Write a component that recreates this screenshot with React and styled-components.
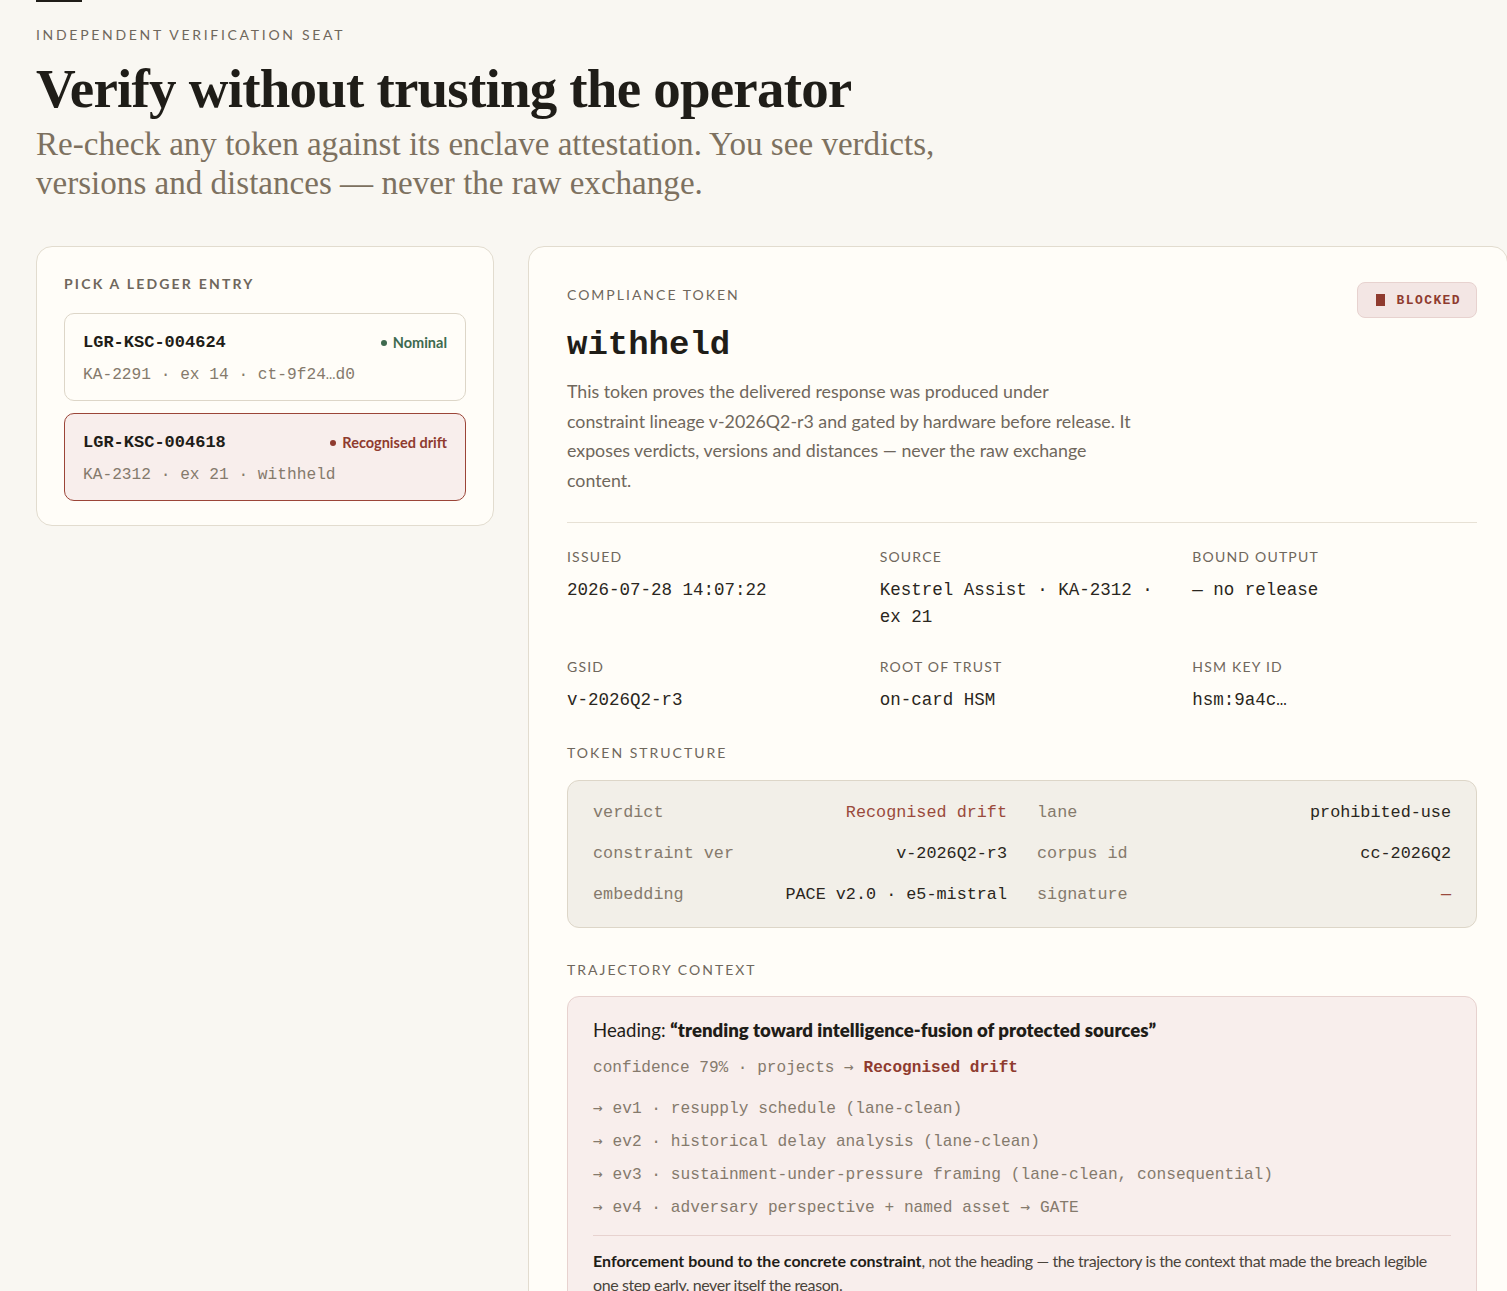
import styled, { createGlobalStyle } from "styled-components";

const sans = `Lato, "Noto Sans", "Liberation Sans", sans-serif`;
const mono = `"Liberation Mono", "DejaVu Sans Mono", monospace`;
const serif = `"Liberation Serif", "DejaVu Serif", serif`;

const GlobalStyle = createGlobalStyle`
  html, body {
    margin: 0;
    padding: 0;
    background: #f9f7f2;
    overflow-x: hidden;
  }
  body {
    font-family: ${sans};
    color: #1f1d18;
  }
  * { box-sizing: border-box; }
`;

const Page = styled.div`
  padding: 0 0 40px 36px;
`;

const TopRule = styled.div`
  width: 46px;
  height: 2px;
  background: #1f1d18;
`;

const Eyebrow = styled.div`
  margin-top: 23px;
  font-size: 14px;
  line-height: 20px;
  letter-spacing: 2.7px;
  text-transform: uppercase;
  color: #6f675c;
`;

const Title = styled.h1`
  margin: 11px 0 0;
  font-family: ${serif};
  font-weight: 700;
  font-size: 55px;
  line-height: 66px;
  letter-spacing: -0.8px;
  color: #1f1d18;
`;

const Subtitle = styled.p`
  margin: 3px 0 0;
  max-width: 940px;
  font-family: ${serif};
  font-size: 33.1px;
  line-height: 39px;
  color: #7d7160;
`;

const Layout = styled.div`
  display: grid;
  grid-template-columns: 458px 980px;
  gap: 34px;
  align-items: start;
  margin-top: 43px;
`;

const Panel = styled.section`
  background: #fffdf8;
  border: 1px solid #e2dccf;
  border-radius: 16px;
`;

const SidePanel = styled(Panel)`
  padding: 27px 27px 24px;
`;

const MainPanel = styled(Panel)`
  padding: 38px 30px 40px 38px;
`;

const Label = styled.div`
  font-size: 14px;
  line-height: 20px;
  letter-spacing: ${(p) => (p.$bold ? "2.2px" : p.$wide ? "2px" : "1.2px")};
  text-transform: uppercase;
  font-weight: ${(p) => (p.$bold ? 700 : 400)};
  color: #6f675c;
`;

const EntryList = styled.div`
  display: flex;
  flex-direction: column;
  gap: 12px;
  margin-top: 19px;
`;

const Entry = styled.div`
  padding: 17px 18px 13px;
  border-radius: 10px;
  border: 1px solid ${(p) => (p.$active ? "#9b4538" : "#ddd6c8")};
  background: ${(p) => (p.$active ? "#f8eeec" : "#fffdf8")};
`;

const EntryTop = styled.div`
  display: flex;
  justify-content: space-between;
  align-items: center;
  line-height: 24px;
`;

const EntryId = styled.span`
  font-family: ${mono};
  font-weight: 700;
  font-size: 17px;
  color: #1f1d18;
`;

const Status = styled.span`
  font-size: 14.5px;
  font-weight: 700;
  color: ${(p) => (p.$tone === "red" ? "#8f3b2f" : "#3e6a4f")};
  &::before {
    content: "";
    display: inline-block;
    width: 6px;
    height: 6px;
    border-radius: 50%;
    background: currentColor;
    margin-right: 6px;
    vertical-align: 2px;
  }
`;

const EntryMeta = styled.div`
  margin-top: 8px;
  font-family: ${mono};
  font-size: 16.2px;
  line-height: 24px;
  color: #857a6c;
`;

const TokenHead = styled.div`
  display: flex;
  justify-content: space-between;
  align-items: flex-start;
`;

const Blocked = styled.div`
  display: flex;
  align-items: center;
  gap: 12px;
  margin-top: -3px;
  height: 36px;
  padding: 0 15px 0 18px;
  border-radius: 8px;
  border: 1px solid #e7d2cf;
  background: #f3e6e4;
  font-family: ${mono};
  font-weight: 700;
  font-size: 13px;
  letter-spacing: 1.4px;
  color: #8f3b2f;
  &::before {
    content: "";
    width: 9px;
    height: 12px;
    background: #8f3b2f;
  }
`;

const TokenValue = styled.div`
  margin-top: 18px;
  font-family: ${mono};
  font-weight: 700;
  font-size: 34px;
  line-height: 44px;
  color: #1f1d18;
`;

const Description = styled.p`
  margin: 10px 0 0;
  max-width: 600px;
  font-size: 17.8px;
  line-height: 29.5px;
  color: #6f675c;
`;

const Divider = styled.hr`
  margin: 27px 0 0;
  border: 0;
  border-top: 1px solid #e7e1d5;
`;

const MetaGrid = styled.div`
  display: grid;
  grid-template-columns: repeat(3, 1fr);
  column-gap: 28px;
  row-gap: 26px;
  padding-top: 24px;
`;

const MetaValue = styled.div`
  margin-top: 10px;
  font-family: ${mono};
  font-size: 17.5px;
  line-height: 27px;
  color: #2a2620;
`;

const Section = styled.div`
  margin-top: ${(p) => p.$top || "30px"};
`;

const StructBox = styled.div`
  margin-top: 17px;
  display: grid;
  grid-template-columns: 1fr 1fr;
  column-gap: 30px;
  row-gap: 16px;
  padding: 19px 25px 20px;
  background: #f2efe8;
  border: 1px solid #ddd6c8;
  border-radius: 12px;
`;

const StructRow = styled.div`
  display: flex;
  justify-content: space-between;
  font-family: ${mono};
  font-size: 16.8px;
  line-height: 25px;
`;

const Key = styled.span`
  color: #857a6c;
`;

const Val = styled.span`
  color: ${(p) => (p.$red ? "#9a4a3c" : "#2a2620")};
`;

const Arrow = styled.span`
  font-family: "DejaVu Sans Mono", monospace;
  font-weight: 400;
  line-height: 0;
  color: #857a6c;
`;

const TrajBox = styled.div`
  margin-top: 16px;
  padding: 20px 25px 0;
  background: #f8eeec;
  border: 1px solid #e7d2cf;
  border-radius: 12px;
`;

const TrajHeading = styled.div`
  font-size: 18.6px;
  line-height: 26px;
  color: #1f1d18;
  b { font-weight: 800; }
`;

const Confidence = styled.div`
  margin-top: 13px;
  font-family: ${mono};
  font-size: 16.1px;
  line-height: 24px;
  color: #857a6c;
  b { font-weight: 700; color: #8f3b2f; }
`;

const Steps = styled.ul`
  list-style: none;
  margin: 17px 0 0;
  padding: 0;
  display: flex;
  flex-direction: column;
  gap: 9px;
`;

const Step = styled.li`
  font-family: ${mono};
  font-size: 16.2px;
  line-height: 24px;
  color: #857a6c;
`;

const TrajFoot = styled.p`
  margin: 15px 0 0;
  padding: 13px 0 20px;
  border-top: 1px solid #e7d2cf;
  font-size: 16px;
  line-height: 24px;
  letter-spacing: -0.4px;
  color: #4a443b;
  b { font-weight: 700; letter-spacing: 0; color: #1f1d18; }
`;

const entries = [
  { id: "LGR-KSC-004624", status: "Nominal", tone: "green", meta: "KA-2291 · ex 14 · ct-9f24…d0" },
  { id: "LGR-KSC-004618", status: "Recognised drift", tone: "red", meta: "KA-2312 · ex 21 · withheld", active: true },
];

const meta = [
  ["Issued", "2026-07-28 14:07:22"],
  ["Source", "Kestrel Assist · KA-2312 · ex 21"],
  ["Bound output", "— no release"],
  ["GSID", "v-2026Q2-r3"],
  ["Root of trust", "on-card HSM"],
  ["HSM key ID", "hsm:9a4c…"],
];

const structure = [
  ["verdict", "Recognised drift", true],
  ["lane", "prohibited-use"],
  ["constraint ver", "v-2026Q2-r3"],
  ["corpus id", "cc-2026Q2"],
  ["embedding", "PACE v2.0 · e5-mistral"],
  ["signature", "—", true],
];

const steps = [
  ["ev1 · resupply schedule (lane-clean)"],
  ["ev2 · historical delay analysis (lane-clean)"],
  ["ev3 · sustainment-under-pressure framing (lane-clean, consequential)"],
  ["ev4 · adversary perspective + named asset ", "GATE"],
];

export default function App() {
  return (
    <>
      <GlobalStyle />
      <Page>
        <TopRule />
        <Eyebrow>Independent verification seat</Eyebrow>
        <Title>Verify without trusting the operator</Title>
        <Subtitle>
          Re-check any token against its enclave attestation. You see verdicts,
          versions and distances — never the raw exchange.
        </Subtitle>

        <Layout>
          <SidePanel>
            <Label $bold>Pick a ledger entry</Label>
            <EntryList>
              {entries.map((e) => (
                <Entry key={e.id} $active={e.active}>
                  <EntryTop>
                    <EntryId>{e.id}</EntryId>
                    <Status $tone={e.tone}>{e.status}</Status>
                  </EntryTop>
                  <EntryMeta>{e.meta}</EntryMeta>
                </Entry>
              ))}
            </EntryList>
          </SidePanel>

          <MainPanel>
            <TokenHead>
              <div>
                <Label $wide>Compliance token</Label>
                <TokenValue>withheld</TokenValue>
              </div>
              <Blocked>BLOCKED</Blocked>
            </TokenHead>
            <Description>
              This token proves the delivered response was produced under
              <br />
              constraint lineage v-2026Q2-r3 and gated by hardware before
              release. It
              <br />
              exposes verdicts, versions and distances — never the raw exchange
              <br />
              content.
            </Description>
            <Divider />
            <MetaGrid>
              {meta.map(([k, v]) => (
                <div key={k}>
                  <Label>{k}</Label>
                  <MetaValue>{v}</MetaValue>
                </div>
              ))}
            </MetaGrid>

            <Section $top="29px">
              <Label $wide>Token structure</Label>
              <StructBox>
                {structure.map(([k, v, red]) => (
                  <StructRow key={k}>
                    <Key>{k}</Key>
                    <Val $red={red}>{v}</Val>
                  </StructRow>
                ))}
              </StructBox>
            </Section>

            <Section $top="32px">
              <Label $wide>Trajectory context</Label>
              <TrajBox>
                <TrajHeading>
                  Heading: <b>“trending toward intelligence-fusion of protected sources”</b>
                </TrajHeading>
                <Confidence>
                  confidence 79% · projects <Arrow>→</Arrow> <b>Recognised drift</b>
                </Confidence>
                <Steps>
                  {steps.map(([s, gate]) => (
                    <Step key={s}>
                      <Arrow>→</Arrow> {s}
                      {gate && (
                        <>
                          <Arrow>→</Arrow> {gate}
                        </>
                      )}
                    </Step>
                  ))}
                </Steps>
                <TrajFoot>
                  <b>Enforcement bound to the concrete constraint</b>, not the
                  heading — the trajectory is the context that made the breach
                  legible one step early, never itself the reason.
                </TrajFoot>
              </TrajBox>
            </Section>
          </MainPanel>
        </Layout>
      </Page>
    </>
  );
}
